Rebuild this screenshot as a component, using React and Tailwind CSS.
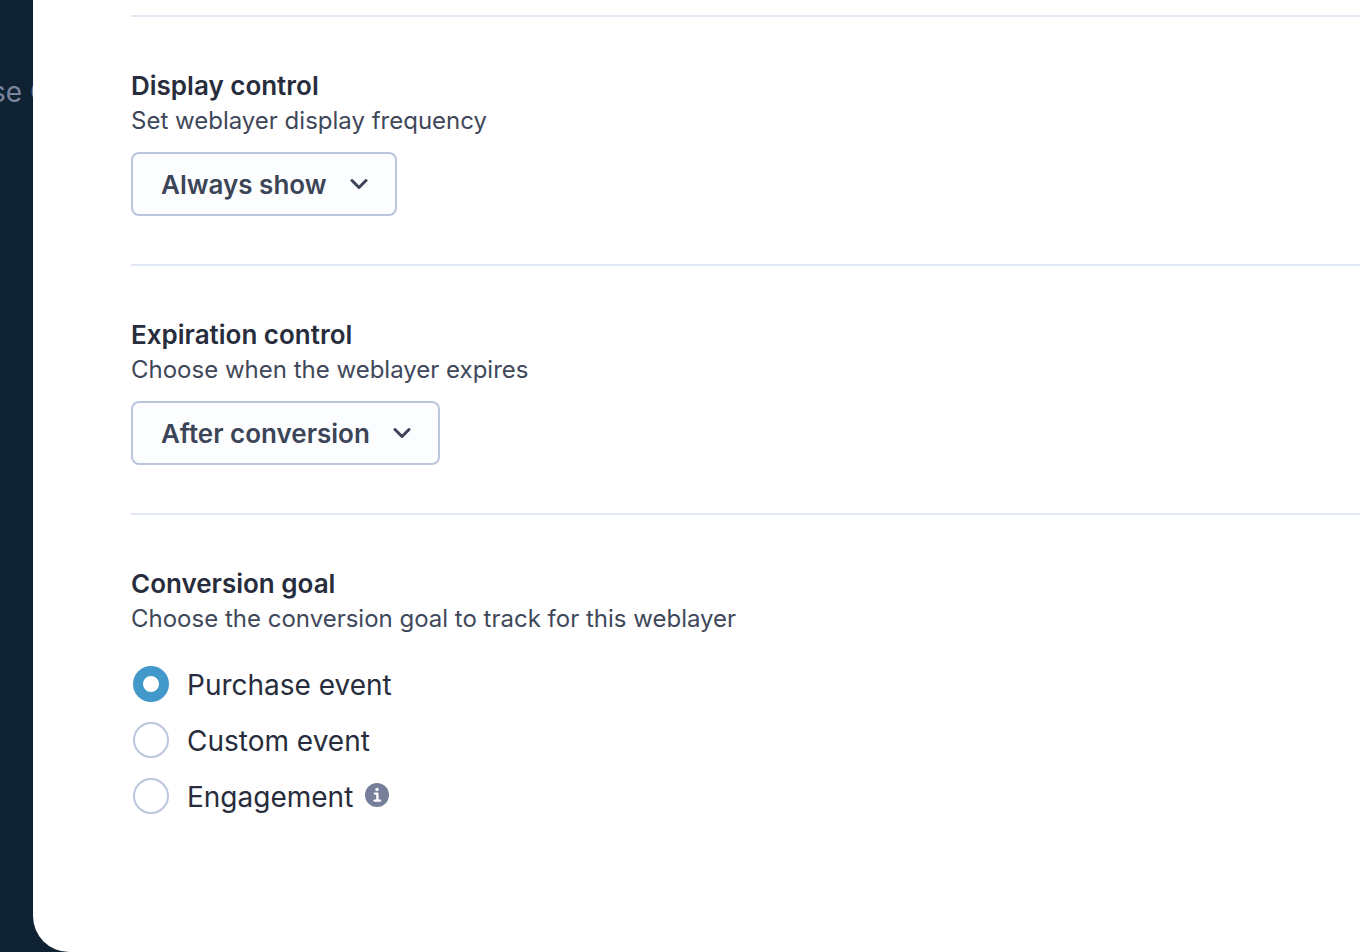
import {useState} from "react"

const goals = [
    {id: "purchase", label: "Purchase event"},
    {id: "custom", label: "Custom event"},
    {id: "engagement", label: "Engagement", info: true},
];

const InfoIcon = () => (
    <svg className="mb-0.5 ml-3 size-6" viewBox="0 0 24 24" fill="none">
        <circle cx="12" cy="12" r="12" fill="#767f9a" />
        <circle cx="12" cy="6.4" r="1.7" fill="#fff" />
        <path d="M9.8 10.6 H12.4 V17.6 M9.4 17.6 H15.2" stroke="#fff" strokeWidth="2.3" strokeLinecap="round" strokeLinejoin="round" />
    </svg>
);

const Section = ({title, text, htmlFor, children}) => (
    <section className="border-t-2 border-[#e1e7f3] pt-[52px] pb-12">
        <h2 className="text-[26px] leading-[34px] font-semibold text-[#272d3c]">
            {htmlFor ? <label htmlFor={htmlFor}>{title}</label> : title}
        </h2>
        <p className="text-2xl leading-9 text-[#3f485a]">{text}</p>
        {children}
    </section>
);

const Dropdown = ({id, options}) => {
    const [value, setValue] = useState(options[0]);

    return (
        <div className="relative mt-[13px] w-fit">
            <select
                id={id}
                value={value}
                onChange={(e) => setValue(e.target.value)}
                className="field-sizing-content block h-16 appearance-none rounded-lg border-2 border-[#bbc5dc] bg-[#fcfdff] pr-[68px] pl-7 text-[26px] font-semibold text-[#3c4557]"
            >
                {options.map((option) => (
                    <option key={option}>{option}</option>
                ))}
            </select>
            <svg
                className="pointer-events-none absolute top-[26px] right-[29px] h-3 w-[18px]"
                viewBox="0 0 18 12"
                fill="none"
                stroke="#3c4557"
                strokeWidth="3"
                strokeLinecap="round"
                strokeLinejoin="round"
            >
                <path d="M2 2.5 L9 9.5 L16 2.5" />
            </svg>
        </div>
    );
}

const App = () => {
    const [goal, setGoal] = useState("purchase");

    return (
        <div className="flex min-h-screen bg-[#0e2233] font-['Inter',sans-serif]">
            <aside className="w-[33px] shrink-0 overflow-hidden pt-[74px]">
                <p className="-ml-[9px] text-[28px] leading-9 whitespace-nowrap text-[#7b859b]">se C</p>
            </aside>
            <main className="min-w-0 flex-1 rounded-bl-[36px] bg-white pt-[15px] pl-[98px]">
                <Section title="Display control" text="Set weblayer display frequency" htmlFor="display">
                    <Dropdown id="display" options={["Always show", "Once per visit", "Until interaction"]} />
                </Section>
                <Section title="Expiration control" text="Choose when the weblayer expires" htmlFor="expiration">
                    <Dropdown id="expiration" options={["After conversion", "After a date", "Never"]} />
                </Section>
                <Section title="Conversion goal" text="Choose the conversion goal to track for this weblayer">
                    <div className="mt-[29px] ml-0.5 flex flex-col gap-5">
                        {goals.map((item) => (
                            <div key={item.id} className="flex h-9 items-center">
                                <input
                                    type="radio"
                                    name="goal"
                                    id={item.id}
                                    checked={goal === item.id}
                                    onChange={() => setGoal(item.id)}
                                    className="size-9 shrink-0 appearance-none rounded-full border-2 border-[#bbc5dc] bg-white checked:border-10 checked:border-[#4398ca]"
                                />
                                <label htmlFor={item.id} className="pt-0.5 pl-[18px] text-[28px] leading-9 text-[#272d3c]">
                                    {item.label}
                                </label>
                                {item.info && <InfoIcon />}
                            </div>
                        ))}
                    </div>
                </Section>
            </main>
        </div>
    );
}

export default App;
